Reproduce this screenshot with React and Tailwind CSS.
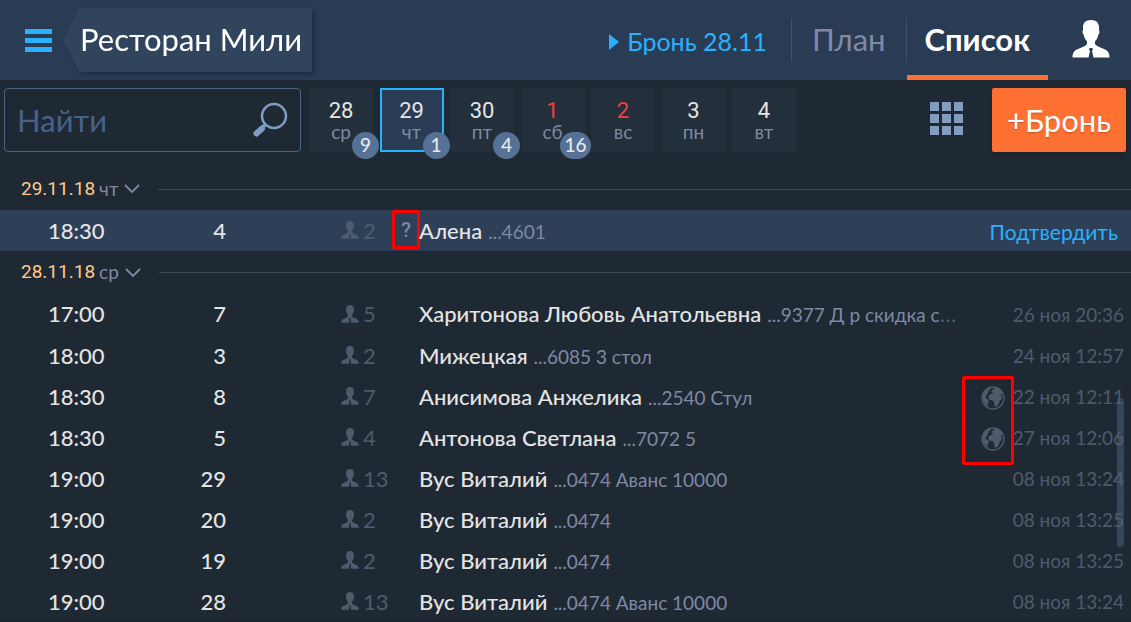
const days = [
  { num: 28, name: "ср", count: 9 },
  { num: 29, name: "чт", count: 1, active: true },
  { num: 30, name: "пт", count: 4 },
  { num: 1, name: "сб", count: 16, weekend: true },
  { num: 2, name: "вс", weekend: true },
  { num: 3, name: "пн" },
  { num: 4, name: "вт" },
];

const groups = [
  {
    date: "29.11.18",
    day: "чт",
    rows: [{ time: "18:30", table: 4, guests: 2, name: "Алена", note: "...4601", pending: true }],
  },
  {
    date: "28.11.18",
    day: "ср",
    rows: [
      { time: "17:00", table: 7, guests: 5, name: "Харитонова Любовь Анатольевна", note: "...9377 Д р скидка с", cut: true, created: "26 ноя 20:36" },
      { time: "18:00", table: 3, guests: 2, name: "Мижецкая", note: "...6085 3 стол", created: "24 ноя 12:57" },
      { time: "18:30", table: 8, guests: 7, name: "Анисимова Анжелика", note: "...2540 Стул", created: "22 ноя 12:11", online: true },
      { time: "18:30", table: 5, guests: 4, name: "Антонова Светлана", note: "...7072 5", created: "27 ноя 12:06", online: true },
      { time: "19:00", table: 29, guests: 13, name: "Вус Виталий", note: "...0474 Аванс 10000", created: "08 ноя 13:24" },
      { time: "19:00", table: 20, guests: 2, name: "Вус Виталий", note: "...0474", created: "08 ноя 13:25" },
      { time: "19:00", table: 19, guests: 2, name: "Вус Виталий", note: "...0474", created: "08 ноя 13:25" },
      { time: "19:00", table: 28, guests: 13, name: "Вус Виталий", note: "...0474 Аванс 10000", created: "08 ноя 13:24" },
    ],
  },
];

function PersonIcon({ className }) {
  return (
    <svg viewBox="0 0 38 38" className={className} fill="currentColor" aria-hidden="true">
      <path d="M19 0c-5.500 0-8 3-8 7.500v3c-.9.5-.7 3.500.7 4.300.5 3 1.600 5 3.300 6.500v2.700c-1.200 1.900-3.500 2.800-6.500 3.900C3 29.900.5 31.500.5 37.500h16l1.500-6.500-1-1.500.8-1.500h2.400l.8 1.500-1 1.500 1.500 6.500h16c0-6-2.500-7.600-8-9.600-3-1.100-5.300-2-6.500-3.900v-2.700c1.700-1.500 2.800-3.500 3.300-6.500 1.400-.8 1.600-3.800.7-4.300v-3C27 3 24.500 0 19 0z" />
    </svg>
  );
}

function SearchIcon() {
  return (
    <svg viewBox="0 0 36 36" className="size-9" fill="none" stroke="#7f9dc2" aria-hidden="true">
      <circle cx="22" cy="14" r="12" strokeWidth="2.500" />
      <path d="M13.500 22.500l-3 3" strokeWidth="3.500" />
      <path d="M10 26.500l-5.500 5" strokeWidth="6" strokeLinecap="round" />
    </svg>
  );
}

function GlobeIcon() {
  return (
    <svg viewBox="0 0 24 24" className="size-6" fill="currentColor" aria-hidden="true">
      <circle cx="12" cy="12" r="11" fill="none" stroke="currentColor" strokeWidth="1.300" />
      <path d="M2.200 7.500C3.700 4.300 6.500 2 10 1.400l-.5 1.800-2 1.300.3 1.500-1.600 1.600-.2 2-1.500 1 .3 1.600 1.700.7 1.500 1.600-.8 2.200-.7 1.300.3 2.500C4.500 19 2.300 16.500 1.600 13.500z" />
      <path d="M12.500 2.500l2-1c3.400.8 6 3 7.500 6l-1.300.6-.6 1.500 1.200 2.200-1 1.800-1.800 1.200-.2 2-1.600 2.400-1.700 1.600-1.500-.6-.3-3-.7-2.200-1.900-.9-2.200-.3-1-2 .4-2.300 1.700-1.600 2-.4.200-1.500-1.500-.7.700-1.300 1.500-.2z" />
    </svg>
  );
}

function Header() {
  return (
    <header className="flex h-20 bg-[#293c54]">
      <button aria-label="Меню" className="ml-[25px] flex w-[38px] flex-col justify-center gap-1">
        <span className="h-[5px] w-[27px] bg-[#29b0ff]" />
        <span className="h-[5px] w-[27px] bg-[#29b0ff]" />
        <span className="h-[5px] w-[27px] bg-[#29b0ff]" />
      </button>
      <div className="my-2 flex h-16 drop-shadow-[2px_2px_2px_#1c2a3c]">
        <svg viewBox="0 0 16 64" className="h-16 w-4" aria-hidden="true">
          <path d="M16 0v64L0 32z" fill="#30455d" />
        </svg>
        <button className="bg-[#30455d] pr-[10px] pb-[2px] pl-px text-[31px] text-white">Ресторан Мили</button>
      </div>
      <div className="ml-auto flex">
        <a href="#booking" className="flex items-center gap-2 pt-1 pr-6 text-[25px] text-[#29b0ff]">
          <svg viewBox="0 0 10 16" className="h-4 w-[10px]" aria-hidden="true">
            <path d="M0 0l10 8-10 8z" fill="currentColor" />
          </svg>
          Бронь 28.11
        </a>
        <nav className="flex items-center">
          <a href="#plan" className="flex h-11 items-center border-l border-[#40536d] px-5 pb-[2px] text-[31px] text-[#8089a5]">План</a>
          <a href="#list" className="flex h-11 items-center border-l border-[#40536d]">
            <span className="flex h-20 items-center border-b-[5px] border-[#ff7033] px-[18px] pt-[3px] text-[31px] font-bold text-white">Список</span>
          </a>
        </nav>
        <button aria-label="Профиль" className="mr-[21px] ml-6 pb-[2px] text-white">
          <PersonIcon className="size-[38px]" />
        </button>
      </div>
    </header>
  );
}

function Day({ day }) {
  return (
    <button
      className={`relative flex size-16 flex-col items-center pt-3 ${
        day.active ? "bg-[#293c54] ring-2 ring-[#29b0ff] ring-inset" : "bg-[#232f3b]"
      }`}
    >
      <span className={`font-[family-name:Roboto] text-[22px] leading-[22px] ${day.weekend ? "text-[#f04040]" : "text-[#e4e4e4]"}`}>
        {day.num}
      </span>
      <span className="text-[19px] leading-5 text-[#7f88a4]">{day.name}</span>
      {day.count && (
        <span className="absolute top-11 -right-[6px] flex h-[27px] min-w-[27px] items-center justify-center rounded-full bg-[#567196] px-1 text-[19px] font-medium text-[#e8e8e8]">
          {day.count}
        </span>
      )}
    </button>
  );
}

function Toolbar() {
  return (
    <div className="flex h-[88px] items-start gap-2 py-2 pr-[5px] pl-1">
      <label className="flex h-16 w-[297px] items-center rounded-sm border border-[#4b6484] px-3">
        <input
          type="text"
          placeholder="Найти"
          aria-label="Найти"
          className="min-w-0 flex-1 bg-transparent text-[31px] text-white outline-none placeholder:text-[#46628c]"
        />
        <SearchIcon />
      </label>
      <div className="flex w-[487px] justify-between">
        {days.map((day) => (
          <Day key={day.num} day={day} />
        ))}
      </div>
      <button aria-label="Календарь" className="mt-[14px] mr-[21px] ml-auto grid grid-cols-3 gap-[3px]">
        {[...Array(9)].map((_, i) => (
          <span key={i} className="size-[9px] bg-[#829dbd]" />
        ))}
      </button>
      <button className="h-16 w-[134px] rounded-xs bg-[#ff7033] text-[31px] text-white shadow-md text-shadow-sm">+Бронь</button>
    </div>
  );
}

function GroupTitle({ group }) {
  return (
    <div className="flex h-[42px] items-center pl-[21px]">
      <button className="flex items-center gap-1 text-[19px] text-[#7f88a4]">
        <span className="font-[family-name:Roboto] text-[#ffc88c]">{group.date}</span>
        {group.day}
        <svg viewBox="0 0 16 10" className="ml-[2px] h-[10px] w-4" fill="none" stroke="currentColor" strokeWidth="1.800" aria-hidden="true">
          <path d="M1 1l7 7 7-7" />
        </svg>
      </button>
      <span className="ml-[18px] flex-1 border-t border-[#3c4857]" />
    </div>
  );
}

function Row({ row }) {
  return (
    <tr className={`h-[41px] border-b border-[#1b242e] ${row.pending ? "bg-[#2d4057]" : ""}`}>
      <td className="pl-12 font-medium text-[#e4e4e4]">{row.time}</td>
      <td className="text-right font-medium text-[#e4e4e4]">{row.table}</td>
      <td className="pl-[115px] text-[#4e5b6d]">
        <span className="flex items-center gap-1">
          <PersonIcon className="size-[18px]" />
          {row.guests}
        </span>
      </td>
      <td className="align-top">
        {row.pending && (
          <span className="flex h-[39px] w-7 items-center justify-center rounded-xs border-[3px] border-[#ff0000] font-[family-name:Roboto] text-xl font-medium text-[#7f88a4]">?</span>
        )}
      </td>
      <td className="truncate text-[#4e5b6d]">
        <span className="font-medium text-[#e4e4e4]">{row.name}</span>
        <span className="ml-[6px] text-[19px] text-[#7f88a4]">{row.note}</span>
        {row.cut && <span>…</span>}
      </td>
      <td className="text-[19px] text-[#4e5b6d]">
        <span className="flex items-center justify-end gap-2 pt-[3px] pr-[7px]">
          {row.online && <GlobeIcon />}
          {row.created}
          {row.pending && <a href="#confirm" className="pr-[6px] text-[21px] text-[#29b0ff]">Подтвердить</a>}
        </span>
      </td>
    </tr>
  );
}

export default function App() {
  return (
    <div className="relative min-h-screen bg-[#1f2933] font-[Lato,sans-serif]">
      <Header />
      <Toolbar />
      <main>
        {groups.map((group) => (
          <section key={group.date}>
            <GroupTitle group={group} />
            <table className="w-full table-fixed border-collapse text-[22px]">
              <colgroup>
                <col className="w-[178px]" />
                <col className="w-12" />
                <col className="w-[166px]" />
                <col className="w-[27px]" />
                <col />
                <col className="w-[168px]" />
              </colgroup>
              <tbody>
                {group.rows.map((row, i) => (
                  <Row key={i} row={row} />
                ))}
              </tbody>
            </table>
          </section>
        ))}
      </main>
      <div className="absolute top-[376px] right-[117px] h-[89px] w-[52px] rounded-xs border-[3px] border-[#ff0000]" />
      <div className="absolute top-[398px] right-[7px] h-[149px] w-[7px] rounded-full bg-[#4b6484]/50" />
    </div>
  );
}
